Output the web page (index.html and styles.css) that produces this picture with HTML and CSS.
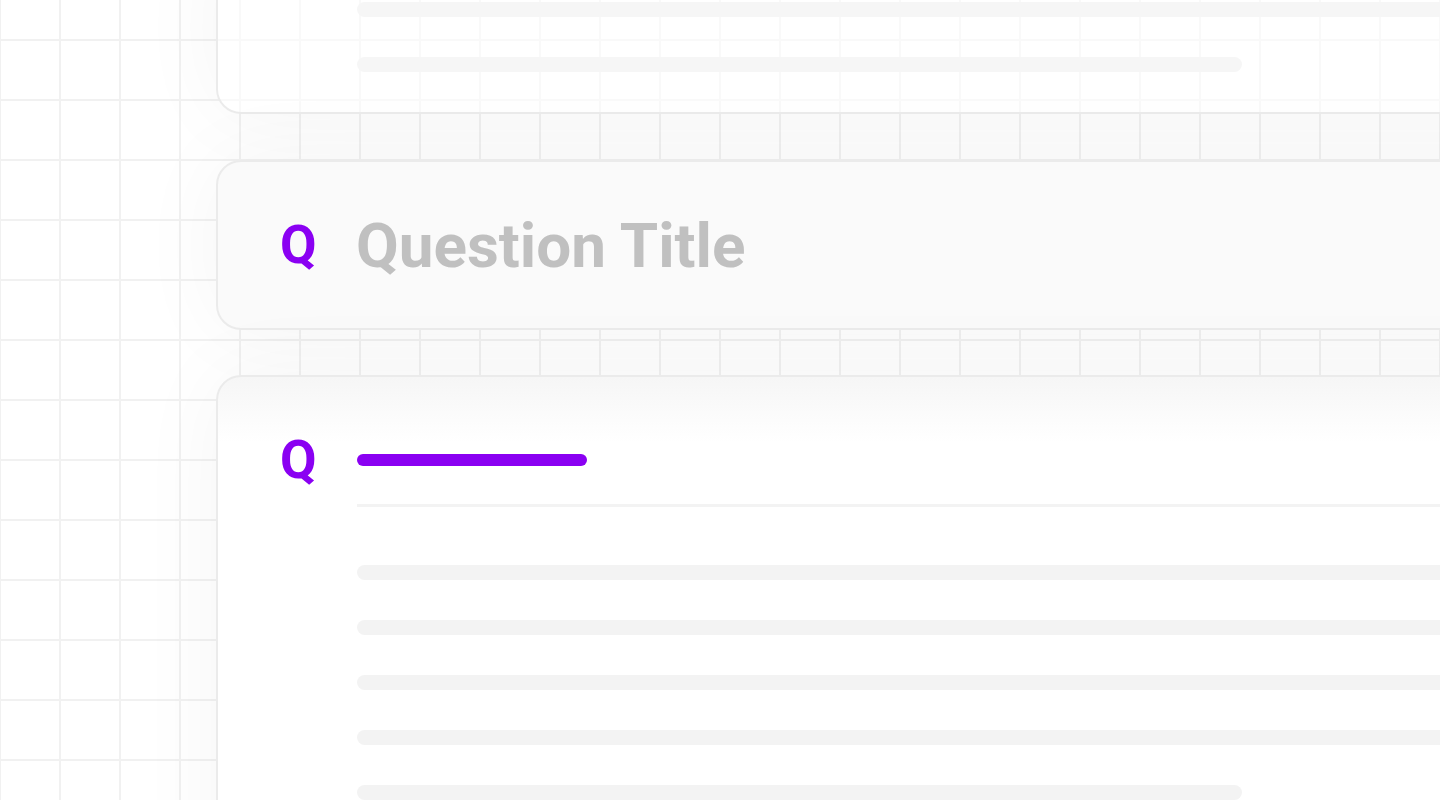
FILE: index.html
```html
<!DOCTYPE html>
<html lang="en">
<head>
<meta charset="utf-8">
<title>Question cards</title>
<link rel="stylesheet" href="styles.css">
</head>
<body>
<main class="stack">
  <section class="card card-faded">
    <div class="lines">
      <div class="line"></div>
      <div class="line line-short"></div>
    </div>
  </section>

  <section class="card card-title">
    <span class="qmark">Q</span>
    <h1 class="title">Question Title</h1>
  </section>

  <section class="card card-body">
    <div class="head">
      <span class="qmark">Q</span>
      <div class="bar"></div>
    </div>
    <div class="divider"></div>
    <div class="lines">
      <div class="line"></div>
      <div class="line"></div>
      <div class="line"></div>
      <div class="line"></div>
      <div class="line line-short"></div>
    </div>
  </section>
</main>
</body>
</html>
```

FILE: styles.css
```css
html, body {
  margin: 0;
  height: 800px;
  overflow: hidden;
}

body {
  background-color: #ffffff;
  background-image:
    linear-gradient(to right, #f1f1f1 2px, transparent 2px),
    linear-gradient(to bottom, #f1f1f1 2px, transparent 2px);
  background-size: 60px 60px;
  background-position: 59px 39px;
  font-family: Roboto, "Liberation Sans", sans-serif;
}

.stack {
  display: flex;
  flex-direction: column;
  gap: 46px;
  margin-top: -60px;
  padding-left: 216px;
}

.card {
  width: 1400px;
  border: 2px solid #ebebeb;
  border-radius: 25px;
  box-shadow: 0 0 90px rgba(0, 0, 0, 0.045);
  box-sizing: border-box;
}

.card-faded {
  background: rgba(255, 255, 255, 0.6);
  padding: 60px 0 40px 139px;
}

.card-faded .line {
  background: #f6f6f6;
}

.lines {
  display: flex;
  flex-direction: column;
  gap: 40px;
}

.line {
  height: 15px;
  border-radius: 8px;
  background: #f3f3f3;
}

.line-short {
  width: 885px;
}

.card-title {
  height: 170px;
  background: #fafafa;
  display: flex;
  align-items: center;
  padding-left: 62px;
}

.qmark {
  flex: 0 0 76px;
  font-weight: 700;
  font-size: 53px;
  line-height: 60px;
  color: #8a00f2;
}

.title {
  margin: 0;
  font-weight: 700;
  font-size: 62px;
  line-height: 72px;
  color: #c0c0c0;
  position: relative;
  top: 1px;
}

.card-body {
  margin-top: -1px;
  height: 600px;
  background: linear-gradient(to bottom, #f6f6f6 0px, #ffffff 65px);
  padding: 53px 0 0 62px;
}

.head {
  display: flex;
  align-items: center;
  height: 60px;
}

.bar {
  width: 230px;
  height: 12px;
  border-radius: 6px;
  background: #8a00f2;
  margin-left: 1px;
}

.divider {
  height: 3px;
  background: #f3f3f3;
  margin: 14px 0 0 77px;
}

.card-body .lines {
  margin: 58px 0 0 77px;
}
```
